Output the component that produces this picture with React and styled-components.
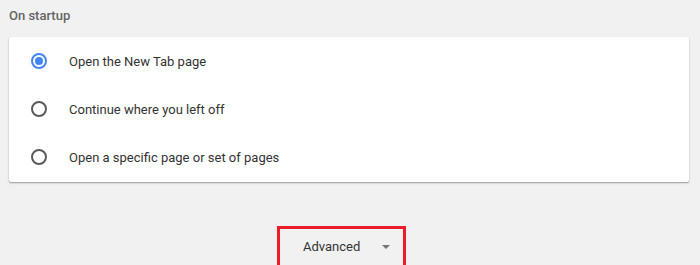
import React from "react";
import styled, { createGlobalStyle } from "styled-components";

const Global = createGlobalStyle`
  html, body { margin: 0; padding: 0; background: #f1f1f1; }
  body { font-family: Roboto, "Liberation Sans", sans-serif; overflow: hidden; }
`;

const Page = styled.div`
  width: 700px;
  height: 265px;
  background: #f1f1f1;
  overflow: hidden;
`;

const SectionTitle = styled.h2`
  margin: 0;
  padding: 8px 9px 0;
  height: 29px;
  font-size: 13px;
  font-weight: 500;
  color: #646464;
  line-height: 16px;
`;

const Card = styled.div`
  margin-left: 9px;
  width: 680px;
  background: #fff;
  border-radius: 2px;
  box-shadow: 0 1px 2px rgba(0, 0, 0, 0.3), 0 1px 1px rgba(0, 0, 0, 0.1);
  padding-bottom: 1px;
`;

const Row = styled.label`
  display: flex;
  align-items: center;
  height: 48px;
  padding-left: 22px;
  gap: 22px;
  font-size: 13px;
  color: #333;
  cursor: pointer;
`;

const Radio = styled.span`
  box-sizing: border-box;
  width: 16px;
  height: 16px;
  border-radius: 50%;
  border: 2px solid ${(p) => (p.$checked ? "#4285f4" : "#5a5a5a")};
  display: flex;
  align-items: center;
  justify-content: center;
  &::after {
    content: "";
    width: 8px;
    height: 8px;
    border-radius: 50%;
    background: ${(p) => (p.$checked ? "#4285f4" : "transparent")};
  }
`;

const Footer = styled.div`
  padding-top: 44px;
  padding-left: 277px;
`;

const Highlight = styled.div`
  box-sizing: border-box;
  width: 129px;
  height: 44px;
  border: 3px solid #ec1c2a;
  display: flex;
  align-items: flex-start;
  padding-top: 7px;
`;

const AdvancedButton = styled.button`
  display: flex;
  align-items: center;
  gap: 22px;
  background: transparent;
  border: none;
  padding: 0 0 0 23px;
  height: 20px;
  font-family: Roboto, "Liberation Sans", sans-serif;
  font-size: 13px;
  color: #333;
  cursor: pointer;
`;

const Caret = styled.span`
  width: 0;
  height: 0;
  border-left: 4.5px solid transparent;
  border-right: 4.5px solid transparent;
  border-top: 4.5px solid #757575;
  margin-top: 1px;
`;

const options = [
  { label: "Open the New Tab page", checked: true },
  { label: "Continue where you left off", checked: false },
  { label: "Open a specific page or set of pages", checked: false },
];

export default function App() {
  return (
    <Page>
      <Global />
      <SectionTitle>On startup</SectionTitle>
      <Card>
        {options.map((o) => (
          <Row key={o.label}>
            <Radio $checked={o.checked} />
            <span>{o.label}</span>
          </Row>
        ))}
      </Card>
      <Footer>
        <Highlight>
          <AdvancedButton>
            Advanced
            <Caret />
          </AdvancedButton>
        </Highlight>
      </Footer>
    </Page>
  );
}
